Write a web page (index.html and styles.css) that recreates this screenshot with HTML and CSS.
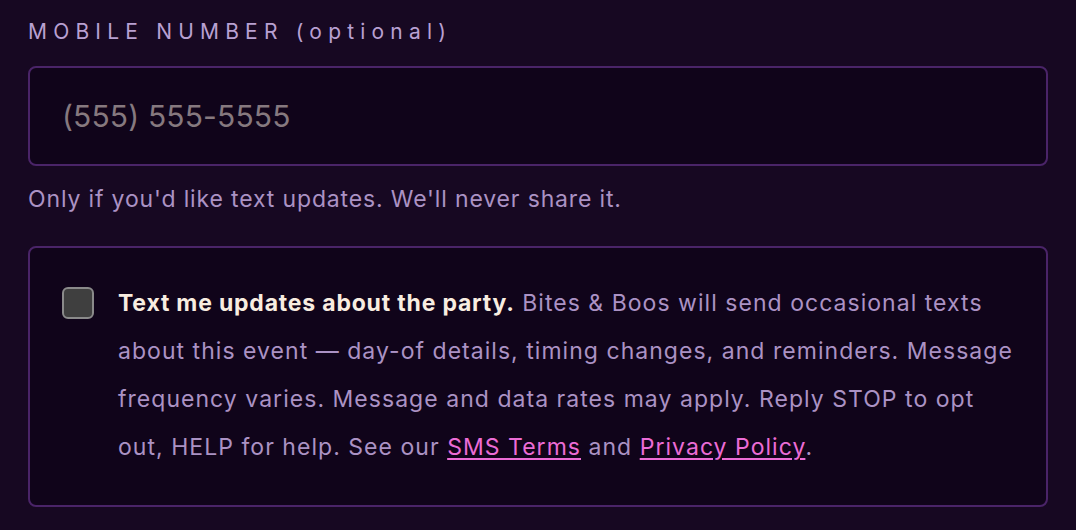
FILE: index.html
```html
<!DOCTYPE html>
<html lang="en">
<head>
    <meta charset="UTF-8">
    <meta name="viewport" content="width=device-width, initial-scale=1.0">
    <title>RSVP - Mobile Number</title>
    <link rel="stylesheet" href="styles.css">
</head>
<body>
    <div class="field">
        <label for="mobile" class="field-label">Mobile Number <span class="optional">(optional)</span></label>
        <input type="tel" id="mobile" name="mobile" class="field-input" placeholder="(555) 555-5555">
        <p class="field-help">Only if you'd like text updates. We'll never share it.</p>
    </div>

    <div class="consent">
        <input type="checkbox" id="sms-consent" name="sms-consent" class="consent-check">
        <label for="sms-consent" class="consent-text">
            <strong>Text me updates about the party.</strong> Bites &amp; Boos will send occasional texts
            about this event &mdash; day-of details, timing changes, and reminders. Message frequency varies.
            Message and data rates may apply. Reply STOP to opt out, HELP for help. See our
            <a href="#">SMS Terms</a> and <a href="#">Privacy Policy</a>.
        </label>
    </div>
</body>
</html>
```

FILE: styles.css
```css
body {
    font-family: Inter, "Noto Sans", sans-serif;
    background-color: #170822;
    margin: 0;
    padding: 14px 28px 0 28px;
}
.field {
    margin-bottom: 32px;
}
.field-label {
    display: block;
    font-size: 21px;
    line-height: 36px;
    letter-spacing: 0.295em;
    text-transform: uppercase;
    color: #b9a0d2;
    margin-bottom: 16px;
}
.optional {
    text-transform: none;
}
.field-input {
    display: block;
    width: 100%;
    height: 100px;
    box-sizing: border-box;
    padding: 0 32px;
    background-color: #10041a;
    border: 2px solid #4a2468;
    border-radius: 8px;
    font-family: Inter, "Noto Sans", sans-serif;
    font-size: 30px;
    letter-spacing: 0.005em;
    color: #eee;
    outline: none;
}
.field-input::placeholder {
    color: #86797f;
}
.field-help {
    margin: 18px 0 0;
    font-size: 23px;
    line-height: 30px;
    letter-spacing: 0.037em;
    color: #ab92c4;
}
.consent {
    display: flex;
    gap: 24px;
    align-items: flex-start;
    padding: 31px 32px 34px 32px;
    background-color: #10041a;
    border: 2px solid #4a2468;
    border-radius: 8px;
}
.consent-check {
    appearance: none;
    flex: none;
    width: 32px;
    height: 32px;
    margin: 8px 0 0;
    box-sizing: border-box;
    background-color: #3f3f3f;
    border: 2px solid #8a8a8a;
    border-radius: 6px;
}
.consent-text {
    font-size: 23px;
    line-height: 48px;
    letter-spacing: 0.045em;
    color: #ab92c4;
}
.consent-text strong {
    color: #f8ede0;
    font-weight: 700;
    letter-spacing: 0.035em;
}
.consent-text a {
    color: #ec6cd6;
    text-decoration: underline;
    text-decoration-thickness: 2px;
    text-underline-offset: 3px;
}
```
